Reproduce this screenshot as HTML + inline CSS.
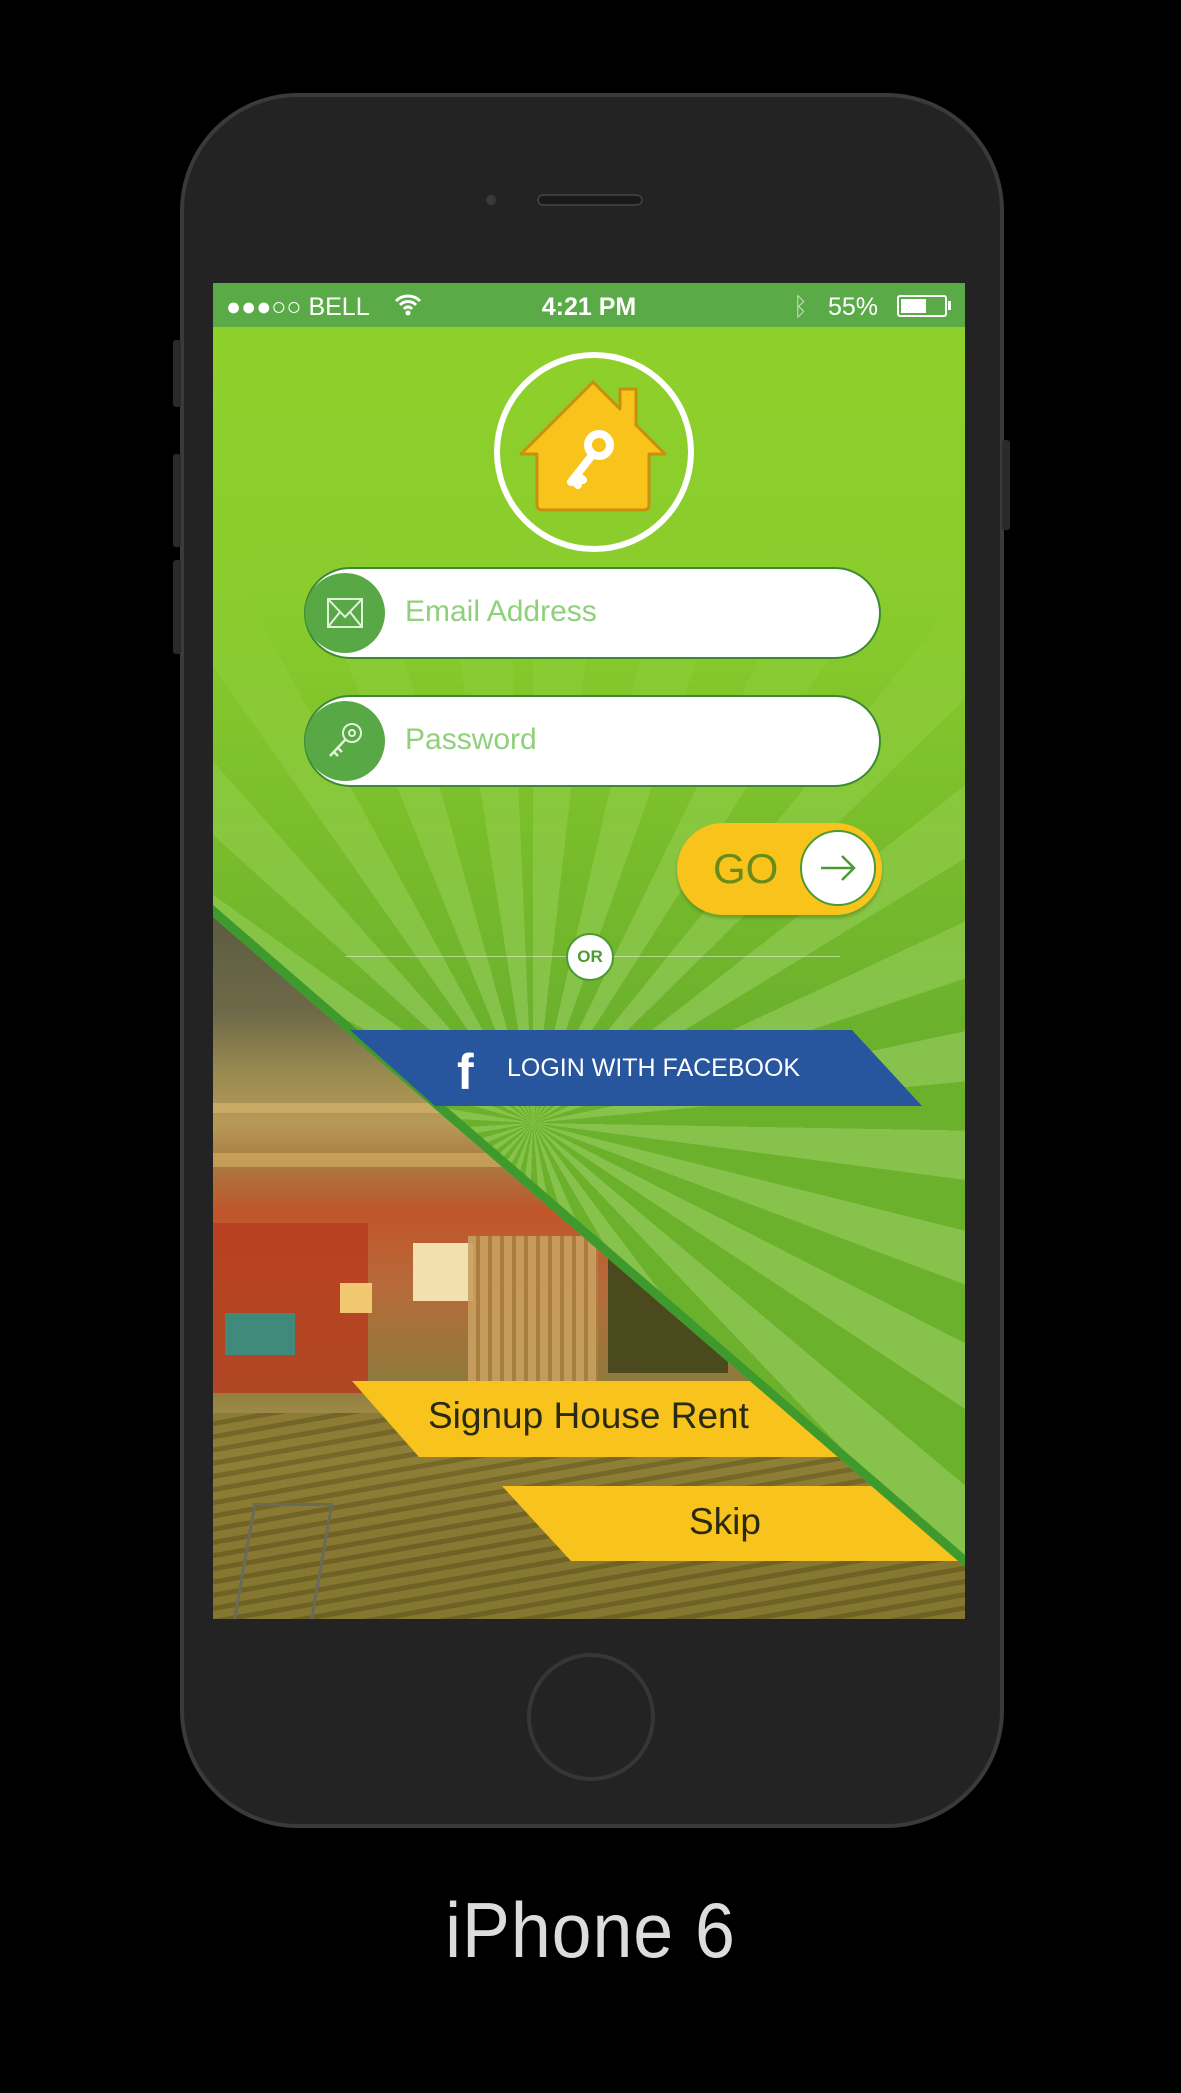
<!DOCTYPE html>
<html><head><meta charset="utf-8"><style>
*{margin:0;padding:0;box-sizing:border-box}
body{width:1181px;height:2093px;background:#000;position:relative;overflow:hidden;font-family:"Liberation Sans",sans-serif}
.abs{position:absolute}
#phone{left:180px;top:93px;width:824px;height:1735px;background:#232323;border:4px solid #3a3a3a;border-radius:118px}
.btn{background:#2a2a2a;width:8px;border-radius:3px}
#screen{left:213px;top:283px;width:752px;height:1336px;overflow:hidden;background:#8ccf2a}
.burst{left:0;top:0;width:752px;height:1336px;background:repeating-conic-gradient(from 0deg at 320px 840px,#86c24c 0deg 6.5deg,#6cb12c 6.5deg 13deg);clip-path:polygon(0 0,752px 0,752px 1278px,0 628px)}
.fade{left:0;top:0;width:752px;height:1336px;background:linear-gradient(180deg,#8fd02a 0px,#8acd2c 300px,rgba(138,205,44,0.55) 500px,rgba(138,205,44,0) 740px);clip-path:polygon(0 0,752px 0,752px 1278px,0 628px)}
.edge{left:0;top:0;width:752px;height:1336px;background:#3f9a2e;clip-path:polygon(0 622px,752px 1272px,752px 1284px,0 634px)}
.photo{left:0;top:0;width:752px;height:1336px;clip-path:polygon(0 634px,752px 1284px,752px 1336px,0 1336px);
background:linear-gradient(180deg,#5a5a40 620px,#6e6a48 730px,#9a8a50 790px,#b89a58 840px,#a87a42 880px,#c0552a 930px,#b86a3a 1000px,#8f7a3c 1100px,#b4a25a 1180px,#7a6a2e 1250px,#5a5a20 1336px)}
.fb{left:137px;top:747px;width:572px;height:76px;background:#27559e;clip-path:polygon(0 0,502px 0,572px 76px,85px 76px)}
.yb{background:#f7c31c}
.st{color:#fff;font-size:25px;top:10px}
</style></head><body>
<div id="phone" class="abs"></div>
<div class="abs btn" style="left:173px;top:340px;height:67px"></div>
<div class="abs btn" style="left:173px;top:454px;height:93px"></div>
<div class="abs btn" style="left:173px;top:560px;height:94px"></div>
<div class="abs btn" style="left:1002px;top:440px;height:90px"></div>
<div class="abs" style="left:486px;top:195px;width:10px;height:10px;border-radius:50%;background:#3a3a3a"></div>
<div class="abs" style="left:537px;top:194px;width:106px;height:12px;border-radius:6px;border:2px solid #3c3c3c;background:#1a1a1a"></div>
<div class="abs" style="left:527px;top:1653px;width:128px;height:128px;border-radius:50%;border:4px solid #363636"></div>
<div class="abs" style="left:0;top:1885px;width:1181px;text-align:center;color:#dcdcdc;font-size:78px;letter-spacing:1px;transform:scaleX(0.92)">iPhone 6</div>

<div id="screen" class="abs">
 <div class="abs photo"></div>
 <div class="abs" style="left:0;top:0;width:752px;height:1336px;clip-path:polygon(0 634px,752px 1284px,752px 1336px,0 1336px)">
  <div class="abs" style="left:0;top:820px;width:752px;height:10px;background:#d8b870;opacity:.6"></div>
  <div class="abs" style="left:0;top:870px;width:752px;height:14px;background:#e0c070;opacity:.5"></div>
  <div class="abs" style="left:0;top:940px;width:155px;height:170px;background:#b63d20;opacity:.85"></div>
  <div class="abs" style="left:12px;top:1030px;width:70px;height:42px;background:#3f8a7a"></div>
  <div class="abs" style="left:127px;top:1000px;width:32px;height:30px;background:#f0c870"></div>
  <div class="abs" style="left:200px;top:960px;width:60px;height:58px;background:#f2e0b0"></div>
  <div class="abs" style="left:255px;top:953px;width:130px;height:160px;background:repeating-linear-gradient(90deg,#c9a060 0 8px,#a88040 8px 12px);opacity:.9"></div>
  <div class="abs" style="left:395px;top:960px;width:120px;height:130px;background:#4b4a1e"></div>
  <div class="abs" style="left:0;top:1130px;width:752px;height:210px;background:repeating-linear-gradient(170deg,#8a7a32 0 8px,#6f6224 8px 13px);opacity:.9"></div>
  <div class="abs" style="left:30px;top:1220px;width:80px;height:120px;border:3px solid #6a6a5a;transform:skewX(-10deg)"></div>
 </div>
 <div class="abs burst"></div>
 <div class="abs fade"></div>
 <div class="abs edge"></div>
 <div class="abs" style="left:0;top:0;width:752px;height:1336px;clip-path:polygon(0 634px,752px 1284px,752px 1336px,0 1336px)">
  <div class="abs yb" style="left:139px;top:1098px;width:560px;height:76px;clip-path:polygon(0 0,560px 0,560px 76px,67px 76px)"></div>
  <div class="abs yb" style="left:289px;top:1203px;width:470px;height:75px;clip-path:polygon(0 0,470px 0,470px 75px,69px 75px)"></div>
  <div class="abs" style="left:215px;top:1112px;font-size:37px;color:#2a2a12">Signup House Rent</div>
  <div class="abs" style="left:476px;top:1218px;font-size:37px;color:#2a2a12">Skip</div>
 </div>
 <div class="abs fb"></div>
 <div class="abs" style="left:244px;top:760px;color:#fff;font:bold 50px 'Liberation Sans',sans-serif">f</div>
 <div class="abs" style="left:294px;top:771px;color:#fff;font-size:25px">LOGIN WITH FACEBOOK</div>

 <div class="abs" style="left:0;top:0;width:752px;height:44px;background:#5aab48"></div>
 <div class="abs st" style="left:13px">●●●○○ BELL</div>
 <svg class="abs" style="left:180px;top:9px" width="30" height="26" viewBox="0 0 30 26"><path d="M3 9a17 17 0 0 1 24 0M7 13a11 11 0 0 1 16 0M11 17a5 5 0 0 1 8 0" stroke="#fff" stroke-width="3" fill="none"/><circle cx="15" cy="21" r="2.5" fill="#fff"/></svg>
 <div class="abs st" style="left:0;width:752px;text-align:center;font-weight:bold">4:21 PM</div>
 <div class="abs st" style="left:580px;color:#bfe0b5">ᛒ</div>
 <div class="abs st" style="left:615px">55%</div>
 <div class="abs" style="left:684px;top:12px;width:50px;height:22px;border:2px solid #fff;border-radius:3px;padding:2px"><div style="width:60%;height:100%;background:#fff"></div></div>
 <div class="abs" style="left:735px;top:18px;width:3px;height:9px;background:#fff"></div>

 <div class="abs" style="left:281px;top:69px;width:200px;height:200px;border:6px solid #fff;border-radius:50%"></div>
 <svg class="abs" style="left:304px;top:96px" width="152" height="135" viewBox="0 0 152 135">
  <path d="M76 3 L103 30 L103 10 L119 10 L119 46 L148 75 L132 75 L132 126 Q132 131 127 131 L25 131 Q20 131 20 126 L20 75 L4 75 Z" fill="#f8c31b" stroke="#c9900e" stroke-width="3" stroke-linejoin="round"/>
  <circle cx="82" cy="66" r="11" fill="none" stroke="#fff" stroke-width="8"/>
  <path d="M76 75 L54 103 M60 96 L66 101 M56 101 L61 106" stroke="#fff" stroke-width="8" stroke-linecap="round"/>
 </svg>

 <div class="abs" style="left:91px;top:284px;width:577px;height:92px;background:#fff;border:2px solid #3b8a33;border-radius:46px"></div>
 <div class="abs" style="left:92px;top:290px;width:80px;height:80px;background:#58a845;border-radius:50%"></div>
 <svg class="abs" style="left:113px;top:314px" width="38" height="32" viewBox="0 0 38 32"><rect x="2" y="2" width="34" height="28" fill="none" stroke="#e4f3dc" stroke-width="2"/><path d="M2 2 L19 20 L36 2 M2 30 L14 15 M36 30 L24 15" fill="none" stroke="#e4f3dc" stroke-width="2"/></svg>
 <div class="abs" style="left:192px;top:312px;font-size:30px;color:#8fd07a">Email Address</div>

 <div class="abs" style="left:91px;top:412px;width:577px;height:92px;background:#fff;border:2px solid #3b8a33;border-radius:46px"></div>
 <div class="abs" style="left:92px;top:418px;width:80px;height:80px;background:#58a845;border-radius:50%"></div>
 <svg class="abs" style="left:112px;top:437px" width="40" height="42" viewBox="0 0 40 42"><circle cx="27" cy="13" r="9" fill="none" stroke="#e4f3dc" stroke-width="2"/><circle cx="27" cy="13" r="3" fill="none" stroke="#e4f3dc" stroke-width="2"/><path d="M20 20 L5 36 M9 32 L13 36 M13 28 L17 32" fill="none" stroke="#e4f3dc" stroke-width="2.5"/></svg>
 <div class="abs" style="left:192px;top:440px;font-size:30px;color:#8fd07a">Password</div>

 <div class="abs" style="left:464px;top:540px;width:205px;height:92px;background:#f8c31b;border-radius:46px;box-shadow:0 3px 3px rgba(60,100,20,.4)"></div>
 <div class="abs" style="left:500px;top:562px;font-size:42px;color:#6a8a1a">GO</div>
 <div class="abs" style="left:587px;top:547px;width:76px;height:76px;background:#fff;border-radius:50%;border:2px solid #4c9a33"></div>
 <svg class="abs" style="left:606px;top:570px" width="38" height="30" viewBox="0 0 38 30"><path d="M2 15 H35 M23 3 L35 15 L23 27" fill="none" stroke="#4c9a33" stroke-width="2.5"/></svg>

 <div class="abs" style="left:132px;top:673px;width:495px;height:1px;background:rgba(255,255,255,.45)"></div>
 <div class="abs" style="left:353px;top:650px;width:48px;height:48px;border-radius:50%;background:#fff;border:2px solid #4c9a33;font-size:17px;font-weight:bold;color:#4c9a33;text-align:center;line-height:44px">OR</div>
</div>
</body></html>
